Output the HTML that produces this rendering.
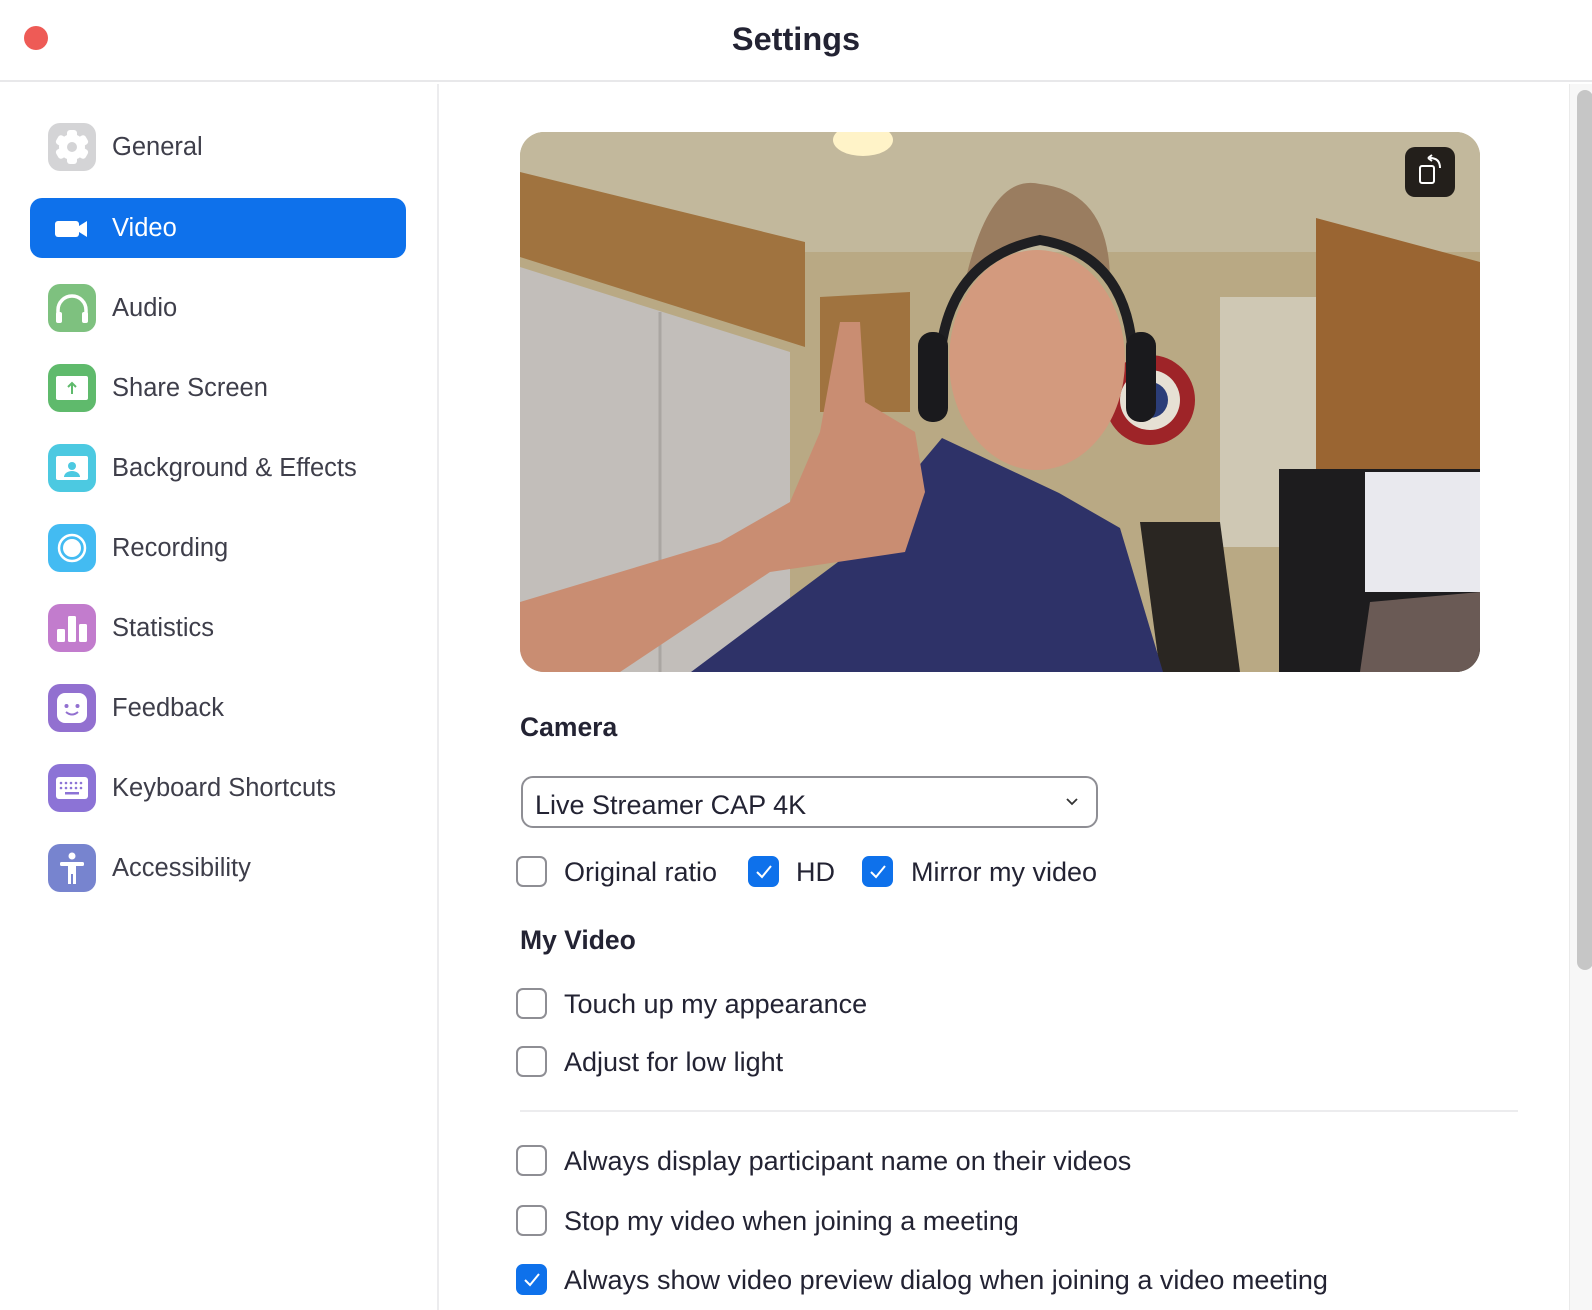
<!DOCTYPE html>
<html><head><meta charset="utf-8"><style>
*{margin:0;padding:0;box-sizing:border-box}
body{width:1592px;height:1310px;background:#fff;font-family:"Liberation Sans",sans-serif;color:#232333;position:relative;overflow:hidden}
.hdr{position:absolute;left:0;top:0;width:1592px;height:82px;border-bottom:2px solid #e8e8ea;background:#fff}
.red{position:absolute;left:24px;top:26px;width:24px;height:24px;border-radius:50%;background:#ee5b56}
.title{position:absolute;left:0;width:1592px;top:21px;text-align:center;font-weight:bold;font-size:32.5px;color:#232333}
.side{position:absolute;left:0;top:84px;width:439px;height:1226px;border-right:2px solid #ececee}
.item{position:absolute;left:30px;width:376px;height:60px;font-size:25.5px;color:#3e3e4a}
.item .ic{position:absolute;left:18px;top:6px;width:48px;height:48px;border-radius:12px}
.item .tx{position:absolute;left:82px;top:16px}
.item.sel{background:#0e71eb;border-radius:12px;color:#fff}
.sb{position:absolute;left:1569px;top:84px;width:23px;height:1226px;background:#f7f7f7;border-left:1px solid #eaeaea}
.thumb{position:absolute;left:7px;top:6px;width:16px;height:880px;border-radius:8px;background:#c6c6c6}
.vid{position:absolute;left:520px;top:132px;width:960px;height:540px;border-radius:24px;overflow:hidden}
.lbl{position:absolute;left:520px;font-weight:bold;font-size:26.5px;color:#232333}
.dd{position:absolute;left:521px;top:776px;width:577px;height:52px;border:2px solid #8e8e94;border-radius:12px;font-size:27px;padding:12px 0 0 12px}
.cb{position:absolute;width:31px;height:31px;border:2px solid #8e8e94;border-radius:7px;background:#fff}
.cb.on{background:#0e71eb;border-color:#0e71eb}
.t{position:absolute;font-size:27px;color:#232333;white-space:nowrap}
</style></head><body>
<div class="hdr"><div class="red"></div><div class="title">Settings</div></div>
<div class="side">
 <div class="item" style="top:33px"><div class="ic" style="background:#d4d4d6"><svg width="48" height="48"><g fill="#fff"><circle cx="24" cy="24" r="13"/><g transform="translate(24 24)"><rect x="-5" y="-17" width="10" height="34" rx="3"/><rect x="-5" y="-17" width="10" height="34" rx="3" transform="rotate(60)"/><rect x="-5" y="-17" width="10" height="34" rx="3" transform="rotate(120)"/></g></g><circle cx="24" cy="24" r="5" fill="#d4d4d6"/></svg></div><div class="tx">General</div></div>
 <div class="item sel" style="top:114px"><div class="ic"><svg width="48" height="48"><rect x="7" y="17" width="24" height="16" rx="3" fill="#fff"/><path d="M31 22l8-5v16l-8-5z" fill="#fff"/></svg></div><div class="tx" style="left:82px">Video</div></div>
 <div class="item" style="top:194px"><div class="ic" style="background:#7ec17f"><svg width="48" height="48"><path d="M10 34V26a14 14 0 0 1 28 0v8" stroke="#fff" stroke-width="3.5" fill="none"/><rect x="8" y="28" width="6" height="11" rx="2" fill="#fff"/><rect x="34" y="28" width="6" height="11" rx="2" fill="#fff"/></svg></div><div class="tx">Audio</div></div>
 <div class="item" style="top:274px"><div class="ic" style="background:#5fba6c"><svg width="48" height="48"><rect x="8" y="12" width="32" height="24" rx="2" fill="#fff"/><path d="M24 30v-10M20 23l4-4 4 4" stroke="#5fba6c" stroke-width="2" fill="none"/></svg></div><div class="tx">Share Screen</div></div>
 <div class="item" style="top:354px"><div class="ic" style="background:#4cc9e1"><svg width="48" height="48"><rect x="8" y="12" width="32" height="24" rx="2" fill="#fff"/><circle cx="24" cy="22" r="4" fill="#4cc9e1"/><path d="M16 33a8 6 0 0 1 16 0z" fill="#4cc9e1"/></svg></div><div class="tx">Background &amp; Effects</div></div>
 <div class="item" style="top:434px"><div class="ic" style="background:#43bbf2"><svg width="48" height="48"><circle cx="24" cy="24" r="13" fill="none" stroke="#fff" stroke-width="2.5"/><circle cx="24" cy="24" r="9" fill="#fff"/></svg></div><div class="tx">Recording</div></div>
 <div class="item" style="top:514px"><div class="ic" style="background:#c27ccd"><svg width="48" height="48"><g fill="#fff"><rect x="9" y="25" width="8" height="13" rx="1.5"/><rect x="20" y="12" width="8" height="26" rx="1.5"/><rect x="31" y="20" width="8" height="18" rx="1.5"/></g></svg></div><div class="tx">Statistics</div></div>
 <div class="item" style="top:594px"><div class="ic" style="background:#9270d0"><svg width="48" height="48"><rect x="9" y="9" width="30" height="30" rx="8" fill="#fff"/><circle cx="18.5" cy="22" r="2" fill="#9270d0"/><circle cx="29.5" cy="22" r="2" fill="#9270d0"/><path d="M18 28q6 5 12 0" stroke="#9270d0" stroke-width="2" fill="none"/></svg></div><div class="tx">Feedback</div></div>
 <div class="item" style="top:674px"><div class="ic" style="background:#8c73d6"><svg width="48" height="48"><rect x="8" y="13" width="32" height="22" rx="3" fill="#fff"/><g fill="#8c73d6"><circle cx="13" cy="19" r="1.3"/><circle cx="18" cy="19" r="1.3"/><circle cx="23" cy="19" r="1.3"/><circle cx="28" cy="19" r="1.3"/><circle cx="33" cy="19" r="1.3"/><circle cx="13" cy="24" r="1.3"/><circle cx="18" cy="24" r="1.3"/><circle cx="23" cy="24" r="1.3"/><circle cx="28" cy="24" r="1.3"/><circle cx="33" cy="24" r="1.3"/><rect x="17" y="28" width="14" height="2.5"/></g></svg></div><div class="tx">Keyboard Shortcuts</div></div>
 <div class="item" style="top:754px"><div class="ic" style="background:#7784cf"><svg width="48" height="48"><g fill="#fff"><circle cx="24" cy="12" r="3.5"/><rect x="12" y="18" width="24" height="4" rx="1.5"/><rect x="20" y="18" width="8" height="12"/><rect x="20" y="28" width="3" height="12"/><rect x="25" y="28" width="3" height="12"/></g></svg></div><div class="tx">Accessibility</div></div>
</div>
<div class="sb"><div class="thumb"></div></div>

<div class="vid"><svg width="960" height="540" viewBox="0 0 960 540">
<rect width="960" height="540" fill="#b9a984"/>
<rect width="960" height="120" fill="#c2b89c"/>
<ellipse cx="343" cy="8" rx="30" ry="16" fill="#fff3c8"/>
<polygon points="0,40 285,110 285,215 0,125" fill="#a0733f"/>
<polygon points="300,165 390,160 390,280 300,280" fill="#a0733f"/>
<polygon points="0,135 270,220 270,540 0,540" fill="#c2beba"/>
<line x1="140" y1="180" x2="140" y2="540" stroke="#aaa6a2" stroke-width="3"/>
<rect x="700" y="165" width="100" height="250" fill="#cfc8b4"/>
<polygon points="796,86 960,130 960,337 796,337" fill="#9a6532"/>
<circle cx="630" cy="268" r="45" fill="#9e2428"/><circle cx="630" cy="268" r="30" fill="#e6e0d4"/><circle cx="630" cy="268" r="18" fill="#2b3d78"/>
<rect x="759" y="337" width="201" height="203" fill="#1d1c1e"/>
<rect x="845" y="340" width="115" height="120" fill="#e9e9ee"/>
<polygon points="850,470 960,460 960,540 840,540" fill="#6a5a55"/>
<polygon points="620,390 700,390 720,540 640,540" fill="#2a2622"/>
<polygon points="171,540 318,430 422,306 539,361 600,396 643,540" fill="#2e3268"/>
<ellipse cx="517" cy="228" rx="88" ry="110" fill="#d39a7e"/>
<path d="M445 150 Q470 40 520 52 Q590 60 590 150 Q560 110 510 112 Q470 115 445 150z" fill="#9a7d60"/>
<path d="M420 270 Q410 130 520 108 Q625 125 612 270" stroke="#1f1f22" stroke-width="10" fill="none"/>
<rect x="398" y="200" width="30" height="90" rx="14" fill="#1a1a1d"/>
<rect x="606" y="200" width="30" height="90" rx="14" fill="#1a1a1d"/>
<polygon points="0,540 0,470 200,410 270,370 300,300 320,190 340,190 345,270 395,300 405,360 385,420 250,440 100,540" fill="#c98d72"/>
<rect x="885" y="15" width="50" height="50" rx="10" fill="#231f1b"/>
<rect x="900" y="34" width="14" height="17" rx="2" fill="none" stroke="#fff" stroke-width="2"/>
<path d="M910 26 q10 0 10 10" fill="none" stroke="#fff" stroke-width="2"/><path d="M908 26 l4 -3 M908 26 l4 3" stroke="#fff" stroke-width="2"/>
</svg></div>

<div class="lbl" style="top:712px">Camera</div>
<div class="dd">Live Streamer CAP 4K<svg style="position:absolute;right:18px;top:20px" width="12" height="8"><path d="M1 1l5 5 5-5" stroke="#333" stroke-width="1.8" fill="none"/></svg></div>

<div class="cb" style="left:516px;top:856px"></div><div class="t" style="left:564px;top:857px">Original ratio</div>
<div class="cb on" style="left:748px;top:856px"><svg width="27" height="27"><path d="M7 14l5 5 9-11" stroke="#fff" stroke-width="2" fill="none"/></svg></div><div class="t" style="left:796px;top:857px">HD</div>
<div class="cb on" style="left:862px;top:856px"><svg width="27" height="27"><path d="M7 14l5 5 9-11" stroke="#fff" stroke-width="2" fill="none"/></svg></div><div class="t" style="left:911px;top:857px">Mirror my video</div>

<div class="lbl" style="top:925px">My Video</div>
<div class="cb" style="left:516px;top:988px"></div><div class="t" style="left:564px;top:989px">Touch up my appearance</div>
<div class="cb" style="left:516px;top:1046px"></div><div class="t" style="left:564px;top:1047px">Adjust for low light</div>
<div style="position:absolute;left:520px;top:1110px;width:998px;height:2px;background:#ececee"></div>
<div class="cb" style="left:516px;top:1145px"></div><div class="t" style="left:564px;top:1146px">Always display participant name on their videos</div>
<div class="cb" style="left:516px;top:1205px"></div><div class="t" style="left:564px;top:1206px">Stop my video when joining a meeting</div>
<div class="cb on" style="left:516px;top:1264px"><svg width="27" height="27"><path d="M7 14l5 5 9-11" stroke="#fff" stroke-width="2" fill="none"/></svg></div><div class="t" style="left:564px;top:1265px">Always show video preview dialog when joining a video meeting</div>
</body></html>
